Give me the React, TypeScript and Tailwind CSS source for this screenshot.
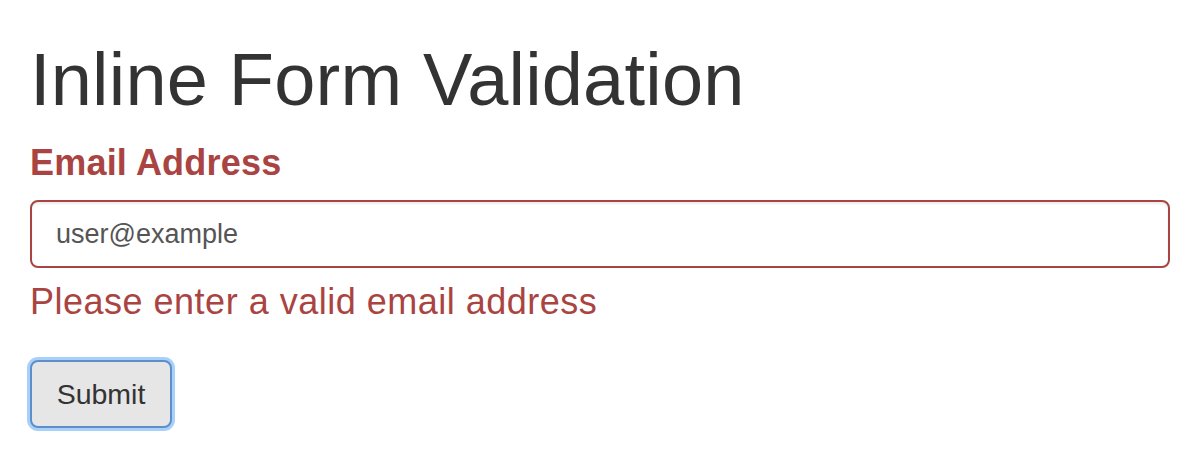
export default function App() {
  return (
    <div className="min-h-screen bg-white px-[30px] pt-[40px] font-['Liberation_Sans',Arial,sans-serif]">
      <h1 className="text-[74px] leading-[80px] font-normal tracking-[0.2px] text-[#333333]">
        Inline Form Validation
      </h1>

      <form className="mt-[23px] flex flex-col items-start" onSubmit={(e) => e.preventDefault()}>
        <label
          htmlFor="email"
          className="text-[36px] leading-[40px] font-bold tracking-[0.2px] text-[#a94442]"
        >
          Email Address
        </label>
        <input
          id="email"
          type="text"
          defaultValue="user@example"
          className="mt-[17px] h-[68px] w-[1140px] rounded-[8px] border-2 border-[#a94442] bg-white px-[24px] text-[27px] text-[#555555] shadow-[inset_0_2px_2px_rgba(0,0,0,0.075)] outline-none"
        />
        <p className="mt-[14px] text-[36px] leading-[40px] tracking-[0.5px] text-[#a94442]">
          Please enter a valid email address
        </p>
        <button
          type="submit"
          className="mt-[38px] flex h-[68px] w-[142px] items-center justify-center rounded-[8px] border-2 border-[#5e8fcc] bg-[#e6e6e6] text-[28.5px] text-[#333333] shadow-[0_0_0_3px_#a9d0f8]"
        >
          Submit
        </button>
      </form>
    </div>
  );
}
